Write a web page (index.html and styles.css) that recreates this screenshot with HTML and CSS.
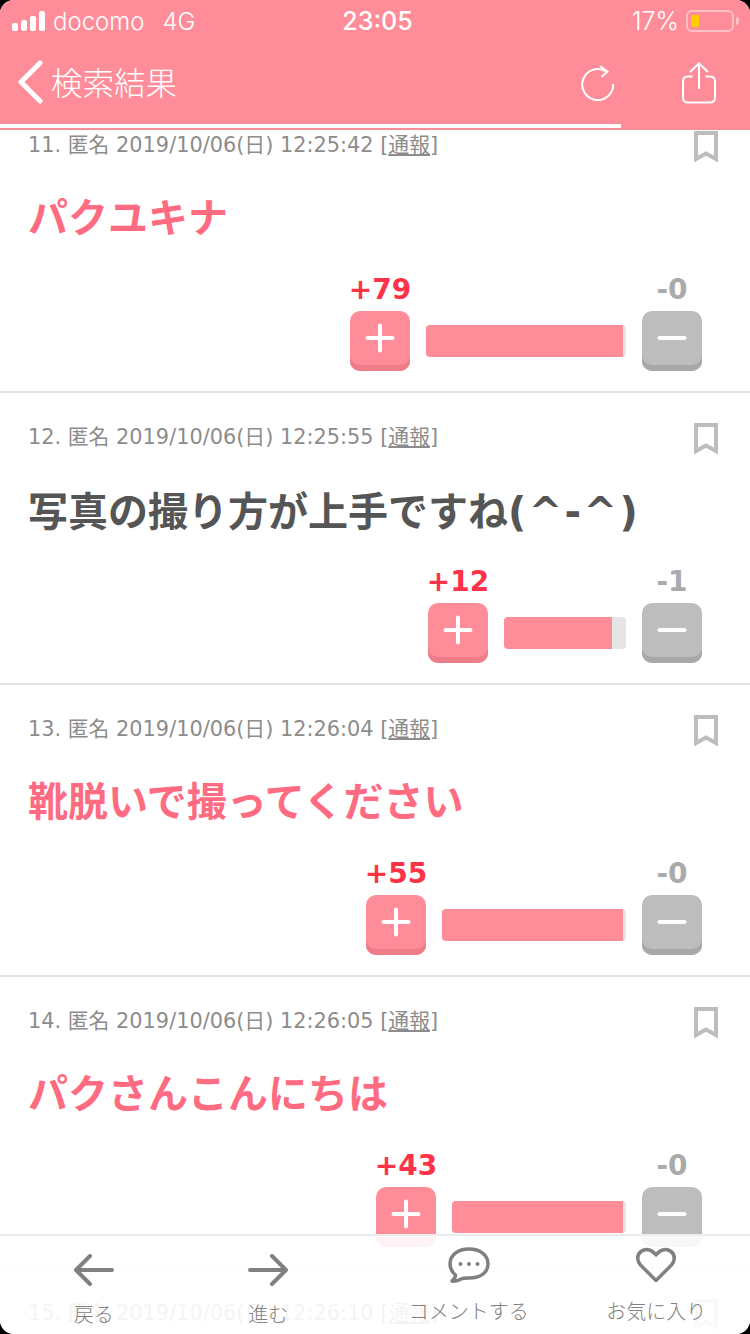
FILE: index.html
```html
<!DOCTYPE html>
<html lang="ja">
<head>
    <meta charset="UTF-8">
    <meta name="viewport" content="width=device-width, initial-scale=1.0">
    <title>検索結果</title>
    <link rel="stylesheet" href="styles.css">
</head>
<body>
    <div class="screen">
        <div class="header">
            <div class="status">
                <div class="status-left">
                    <div class="signal"><i></i><i></i><i></i><i></i></div>
                    <span class="carrier">docomo</span>
                    <span class="network">4G</span>
                </div>
                <div class="clock">23:05</div>
                <div class="status-right">
                    <span>17%</span>
                    <div class="battery"><div class="battery-level"></div></div>
                    <div class="battery-tip"></div>
                </div>
            </div>
            <div class="nav">
                <svg class="nav-back" width="28" height="44" viewBox="0 0 28 44"><path d="M24 3 L5 22 L24 41" fill="none" stroke="#fff" stroke-width="5" stroke-linecap="round" stroke-linejoin="round"/></svg>
                <div class="nav-title">検索結果</div>
                <svg class="nav-reload" width="36" height="36" viewBox="0 0 36 36"><path d="M26 6.500 A15.500 15.500 0 1 0 33.200 19" fill="none" stroke="#fff" stroke-width="2"/><path d="M20 1 L27.500 6.500 L21.500 12" fill="none" stroke="#fff" stroke-width="2"/></svg>
                <svg class="nav-share" width="34" height="42" viewBox="0 0 34 42"><path d="M10.500 14.500 H6 Q1 14.500 1 19.500 V35.500 Q1 40.500 6 40.500 H28 Q33 40.500 33 35.500 V19.500 Q33 14.500 28 14.500 H23.500" fill="none" stroke="#fff" stroke-width="2"/><path d="M17 27 V1.500 M8 10 L17 1.500 L26 10" fill="none" stroke="#fff" stroke-width="2"/></svg>
            </div>
            <div class="progress"></div>
        </div>

        <div class="list">
            <div class="post">
                <div class="meta">
                    <span>11. 匿名 2019/10/06(日) 12:25:42 [<u>通報</u>]</span>
                    <svg class="bookmark" width="24" height="32" viewBox="0 0 24 32"><path d="M2 2 H22 V28 L12 22.500 L2 28 Z" fill="none" stroke="#bdbdbd" stroke-width="4"/></svg>
                </div>
                <div class="body hot">パクユキナ</div>
                <div class="votes">
                    <div class="vote"><div class="count plus">+79</div><div class="btn btn-plus"><svg width="32" height="32" viewBox="0 0 32 32"><path d="M16 3.500 V28.500 M3.500 16 H28.500" stroke="#fff" stroke-width="4" stroke-linecap="round"/></svg></div></div>
                    <div class="bar" style="width: 200px"><div class="bar-fill" style="width: 197px"></div></div>
                    <div class="vote"><div class="count minus">-0</div><div class="btn btn-minus"><svg width="32" height="32" viewBox="0 0 32 32"><path d="M3.500 16 H28.500" stroke="#fff" stroke-width="4" stroke-linecap="round"/></svg></div></div>
                </div>
            </div>
            <div class="post">
                <div class="meta">
                    <span>12. 匿名 2019/10/06(日) 12:25:55 [<u>通報</u>]</span>
                    <svg class="bookmark" width="24" height="32" viewBox="0 0 24 32"><path d="M2 2 H22 V28 L12 22.500 L2 28 Z" fill="none" stroke="#bdbdbd" stroke-width="4"/></svg>
                </div>
                <div class="body mixed">写真の撮り方が上手ですね<span class="kaomoji">(^-^)</span></div>
                <div class="votes">
                    <div class="vote"><div class="count plus">+12</div><div class="btn btn-plus"><svg width="32" height="32" viewBox="0 0 32 32"><path d="M16 3.500 V28.500 M3.500 16 H28.500" stroke="#fff" stroke-width="4" stroke-linecap="round"/></svg></div></div>
                    <div class="bar" style="width: 122px"><div class="bar-fill" style="width: 108px"></div></div>
                    <div class="vote"><div class="count minus">-1</div><div class="btn btn-minus"><svg width="32" height="32" viewBox="0 0 32 32"><path d="M3.500 16 H28.500" stroke="#fff" stroke-width="4" stroke-linecap="round"/></svg></div></div>
                </div>
            </div>
            <div class="post">
                <div class="meta">
                    <span>13. 匿名 2019/10/06(日) 12:26:04 [<u>通報</u>]</span>
                    <svg class="bookmark" width="24" height="32" viewBox="0 0 24 32"><path d="M2 2 H22 V28 L12 22.500 L2 28 Z" fill="none" stroke="#bdbdbd" stroke-width="4"/></svg>
                </div>
                <div class="body hot">靴脱いで撮ってください</div>
                <div class="votes">
                    <div class="vote"><div class="count plus">+55</div><div class="btn btn-plus"><svg width="32" height="32" viewBox="0 0 32 32"><path d="M16 3.500 V28.500 M3.500 16 H28.500" stroke="#fff" stroke-width="4" stroke-linecap="round"/></svg></div></div>
                    <div class="bar" style="width: 184px"><div class="bar-fill" style="width: 181px"></div></div>
                    <div class="vote"><div class="count minus">-0</div><div class="btn btn-minus"><svg width="32" height="32" viewBox="0 0 32 32"><path d="M3.500 16 H28.500" stroke="#fff" stroke-width="4" stroke-linecap="round"/></svg></div></div>
                </div>
            </div>
            <div class="post">
                <div class="meta">
                    <span>14. 匿名 2019/10/06(日) 12:26:05 [<u>通報</u>]</span>
                    <svg class="bookmark" width="24" height="32" viewBox="0 0 24 32"><path d="M2 2 H22 V28 L12 22.500 L2 28 Z" fill="none" stroke="#bdbdbd" stroke-width="4"/></svg>
                </div>
                <div class="body hot">パクさんこんにちは</div>
                <div class="votes">
                    <div class="vote"><div class="count plus">+43</div><div class="btn btn-plus"><svg width="32" height="32" viewBox="0 0 32 32"><path d="M16 3.500 V28.500 M3.500 16 H28.500" stroke="#fff" stroke-width="4" stroke-linecap="round"/></svg></div></div>
                    <div class="bar" style="width: 174px"><div class="bar-fill" style="width: 171px"></div></div>
                    <div class="vote"><div class="count minus">-0</div><div class="btn btn-minus"><svg width="32" height="32" viewBox="0 0 32 32"><path d="M3.500 16 H28.500" stroke="#fff" stroke-width="4" stroke-linecap="round"/></svg></div></div>
                </div>
            </div>
            <div class="post">
                <div class="meta">
                    <span>15. 匿名 2019/10/06(日) 12:26:10 [<u>通報</u>]</span>
                    <svg class="bookmark" width="24" height="32" viewBox="0 0 24 32"><path d="M2 2 H22 V28 L12 22.500 L2 28 Z" fill="none" stroke="#bdbdbd" stroke-width="4"/></svg>
                </div>
            </div>
        </div>

        <div class="toolbar">
            <div class="tool tool-back">
                <svg width="40" height="32" viewBox="0 0 40 32"><path d="M38 16 H2 M16 2 L2 16 L16 30" fill="none" stroke="#808080" stroke-width="4" stroke-linecap="round" stroke-linejoin="round"/></svg>
                <span>戻る</span>
            </div>
            <div class="tool tool-forward">
                <svg width="40" height="32" viewBox="0 0 40 32"><path d="M2 16 H38 M24 2 L38 16 L24 30" fill="none" stroke="#808080" stroke-width="4" stroke-linecap="round" stroke-linejoin="round"/></svg>
                <span>進む</span>
            </div>
            <div class="tool tool-comment">
                <svg width="42" height="36" viewBox="0 0 42 36"><path d="M21 2 C32 2 40 8 40 17 C40 26 32 31 21 31 C18 31 15 31 13 32 C10 34 7 34.500 4 34 C6 32.500 7.500 30.500 7.500 28 C4 25 2 21.500 2 17 C2 8 10 2 21 2 Z" fill="none" stroke="#808080" stroke-width="3.500" stroke-linejoin="round"/><circle cx="12.500" cy="17" r="2" fill="#808080"/><circle cx="21" cy="17" r="2" fill="#808080"/><circle cx="29.500" cy="17" r="2" fill="#808080"/></svg>
                <span>コメントする</span>
            </div>
            <div class="tool tool-fav">
                <svg width="40" height="36" viewBox="0 0 40 36"><path d="M20 33.500 L4.500 18 C0.500 13.500 1 7.500 5 4.500 C9.500 1 15.500 2 20 8 C24.500 2 30.500 1 35 4.500 C39 7.500 39.500 13.500 35.500 18 Z" fill="none" stroke="#808080" stroke-width="3.500" stroke-linejoin="round"/></svg>
                <span>お気に入り</span>
            </div>
        </div>
    </div>
</body>
</html>
```

FILE: styles.css
```css
:root {
    --pink: #ff8c99;
    --pink-dark: #ee7d8a;
    --gray: #bdbdbd;
    --gray-dark: #a8a8a8;
    --line: #e3e3e3;
}

* {
    margin: 0;
    padding: 0;
    box-sizing: border-box;
}

html,
body {
    height: 100%;
    background: #000;
    overflow: hidden;
}

.screen {
    position: relative;
    height: 1334px;
    background: #fff;
    border-radius: 14px;
    overflow: hidden;
    font-family: "DejaVu Sans", "Noto Sans CJK JP", sans-serif;
}

/* header */
.header {
    position: relative;
    z-index: 2;
    height: 130px;
    background: var(--pink);
    color: #fff;
}

.status {
    display: flex;
    justify-content: space-between;
    align-items: center;
    height: 40px;
    padding: 2px 11px 0 12px;
    font-family: Inter, sans-serif;
    font-size: 24px;
}

.status-left,
.status-right {
    display: flex;
    align-items: center;
    width: 260px;
}

.status-left {
    width: 264px;
}

.status-right {
    justify-content: flex-end;
}

.signal {
    display: flex;
    align-items: flex-end;
    gap: 3px;
    height: 20px;
    margin-right: 8px;
}

.signal i {
    display: block;
    width: 6px;
    background: #fff;
    border-radius: 2px;
}

.signal i:nth-child(1) { height: 8px; }
.signal i:nth-child(2) { height: 11px; }
.signal i:nth-child(3) { height: 15px; }
.signal i:nth-child(4) { height: 20px; }

.carrier {
    font-weight: 300;
    margin-right: 18px;
}

.network {
    font-weight: 300;
}

.clock {
    font-size: 25px;
    font-weight: 500;
}

.status-right span {
    font-size: 25px;
    font-weight: 300;
    margin-right: 7px;
}

.battery {
    width: 48px;
    height: 22px;
    padding: 3px;
    border: 2px solid rgba(255, 255, 255, 0.45);
    border-radius: 6px;
}

.battery-level {
    width: 8px;
    height: 100%;
    background: #fc0;
    border-radius: 1px;
}

.battery-tip {
    width: 3px;
    height: 8px;
    margin-left: 2px;
    background: rgba(255, 255, 255, 0.45);
    border-radius: 0 3px 3px 0;
}

.nav {
    display: flex;
    align-items: center;
    height: 84px;
    padding: 0 34px 0 16px;
}

.nav-title {
    flex: 1;
    margin: -2px 0 0 7px;
    font-family: "Noto Sans CJK JP", sans-serif;
    font-size: 31.500px;
    font-weight: 300;
}

.nav-reload {
    margin: 2px 66px 0 0;
}

.nav-share {
    margin-top: 1px;
}

.progress {
    width: 621px;
    height: 4px;
    background: #fff;
}

/* posts */
.list {
    margin-top: -29px;
}

.post {
    height: 292px;
    border-bottom: 2px solid var(--line);
    padding: 0 48px 0 29px;
}

.meta {
    display: flex;
    justify-content: space-between;
    align-items: flex-start;
    padding-top: 30px;
    font-size: 20.850px;
    line-height: 28px;
    color: #8c8c8c;
}

.meta span {
    margin-left: -1px;
}

.meta u {
    text-underline-offset: 2px;
}

.bookmark {
    margin-right: -16px;
}

.body {
    margin: 23px 0 0 -1px;
    height: 64px;
    font-size: 40px;
    font-weight: bold;
    line-height: 64px;
    color: #555;
    white-space: nowrap;
}

.body.hot {
    color: #ff6b81;
}

.body.mixed {
    padding-top: 2px;
}

.kaomoji {
    letter-spacing: 2.400px;
}

.votes {
    display: flex;
    justify-content: flex-end;
    align-items: flex-end;
    gap: 16px;
    margin-top: 22px;
}

.vote {
    display: flex;
    flex-direction: column;
    align-items: center;
    width: 60px;
}

.count {
    font-size: 28px;
    font-weight: bold;
    line-height: 36px;
    margin-bottom: 3px;
    white-space: nowrap;
}

.count.plus {
    color: #ff3347;
}

.count.minus {
    color: #aaa;
}

.btn {
    display: flex;
    align-items: center;
    justify-content: center;
    width: 60px;
    height: 60px;
    padding-bottom: 6px;
    border-radius: 10px;
}

.btn-plus {
    background: var(--pink);
    box-shadow: inset 0 -6px 0 var(--pink-dark);
}

.btn-minus {
    background: var(--gray);
    box-shadow: inset 0 -6px 0 var(--gray-dark);
}

.bar {
    height: 32px;
    margin-bottom: 14px;
    background: #e5e5e5;
    border-radius: 4px;
    overflow: hidden;
}

.bar-fill {
    height: 100%;
    background: var(--pink);
}

/* bottom toolbar, translucent over the list */
.toolbar {
    position: absolute;
    left: 0;
    right: 0;
    bottom: 0;
    z-index: 3;
    display: grid;
    grid-template-columns: repeat(4, 1fr);
    height: 100px;
    background: rgba(255, 255, 255, 0.9);
    border-top: 2px solid #ececec;
    font-family: "Noto Sans CJK JP", sans-serif;
    font-size: 20px;
    font-weight: 300;
    color: #808080;
}

.tool {
    display: flex;
    flex-direction: column;
    align-items: center;
    padding-top: 11px;
    white-space: nowrap;
}

.tool span {
    margin-top: 13px;
    line-height: 30px;
}

.tool-back,
.tool-forward {
    padding-top: 18px;
}

.tool-forward {
    padding-right: 26px;
}
```
